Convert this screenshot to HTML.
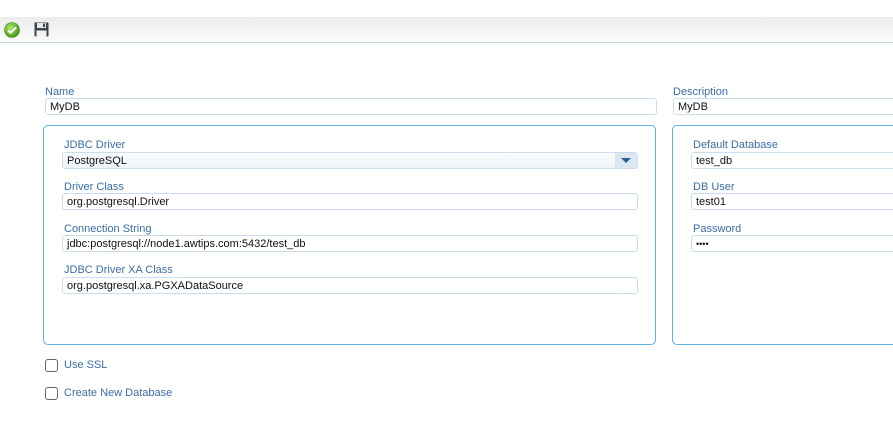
<!DOCTYPE html>
<html><head><style>
*{box-sizing:border-box;margin:0;padding:0}
body{width:893px;height:422px;background:#fff;position:relative;overflow:hidden;font-family:"Liberation Sans",Arial,sans-serif;font-size:11px}
.tb{position:absolute;left:0;top:17px;width:893px;height:26px;background:linear-gradient(#ececec,#fafafa);border-bottom:1px solid #c9d9e8}
.lbl{position:absolute;color:#3b6ea5;font-size:11px;line-height:12px}
.in{position:absolute;height:17px;border:1px solid #cbdcec;border-radius:3px;background:#fff;color:#111;padding-left:4px;padding-top:1px;line-height:15px;font-size:11px}
.box{position:absolute;border:1px solid #5fb0e4;border-radius:5px}
.cb{position:absolute;width:13px;height:13px;border:1px solid #666;border-radius:3px;background:#fff}
</style></head><body>
<div class="tb">
<svg style="position:absolute;left:4px;top:5px" width="16" height="16" viewBox="0 0 16 16"><defs><radialGradient id="g" cx="40%" cy="35%" r="65%"><stop offset="0" stop-color="#b6e86a"/><stop offset="1" stop-color="#3f9a16"/></radialGradient></defs><circle cx="8" cy="8" r="7.5" fill="url(#g)" stroke="#3a8a15" stroke-width=".6"/><path d="M4 8.2l2.6 2.6L12 5.4" fill="none" stroke="#fff" stroke-width="2"/></svg>
<svg style="position:absolute;left:34px;top:5px" width="15" height="15" viewBox="0 0 15 15"><rect x=".5" y=".5" width="14" height="14" rx="1" fill="#3e444c"/><rect x="3" y="1" width="9" height="5" fill="#e6e6e6"/><rect x="9" y="1.5" width="2" height="3.5" fill="#3e444c"/><rect x="2.5" y="8.5" width="10" height="6" fill="#f2f2f2"/></svg>
</div>
<div class="lbl" style="left:45px;top:86px">Name</div>
<div class="in" style="left:45px;top:98px;width:612px">MyDB</div>
<div class="lbl" style="left:673px;top:86px">Description</div>
<div class="in" style="left:673px;top:98px;width:230px">MyDB</div>

<div class="box" style="left:43px;top:125px;width:613px;height:220px"></div>
<div class="box" style="left:672px;top:125px;width:240px;height:220px"></div>

<div class="lbl" style="left:64px;top:139px">JDBC Driver</div>
<div class="in" style="left:62px;top:152px;width:576px;background:linear-gradient(#fafcfe,#eef3f8)">PostgreSQL<div style="position:absolute;right:0;top:0;width:22px;height:15px;background:#dde7f1;border-radius:0 3px 3px 0"><div style="position:absolute;left:6px;top:5px;border-left:5px solid transparent;border-right:5px solid transparent;border-top:5px solid #2e5e95"></div></div></div>
<div class="lbl" style="left:64px;top:181px">Driver Class</div>
<div class="in" style="left:62px;top:193px;width:576px">org.postgresql.Driver</div>
<div class="lbl" style="left:64px;top:223px">Connection String</div>
<div class="in" style="left:62px;top:235px;width:576px">jdbc:postgresql://node1.awtips.com:5432/test_db</div>
<div class="lbl" style="left:64px;top:264px">JDBC Driver XA Class</div>
<div class="in" style="left:62px;top:277px;width:576px">org.postgresql.xa.PGXADataSource</div>

<div class="lbl" style="left:693px;top:139px">Default Database</div>
<div class="in" style="left:691px;top:152px;width:220px">test_db</div>
<div class="lbl" style="left:693px;top:181px">DB User</div>
<div class="in" style="left:691px;top:193px;width:220px">test01</div>
<div class="lbl" style="left:693px;top:223px">Password</div>
<div class="in" style="left:691px;top:235px;width:220px;font-size:9px">••••</div>

<div class="cb" style="left:45px;top:359px"></div>
<div class="lbl" style="left:64px;top:359px">Use SSL</div>
<div class="cb" style="left:45px;top:387px"></div>
<div class="lbl" style="left:64px;top:387px">Create New Database</div>
</body></html>
